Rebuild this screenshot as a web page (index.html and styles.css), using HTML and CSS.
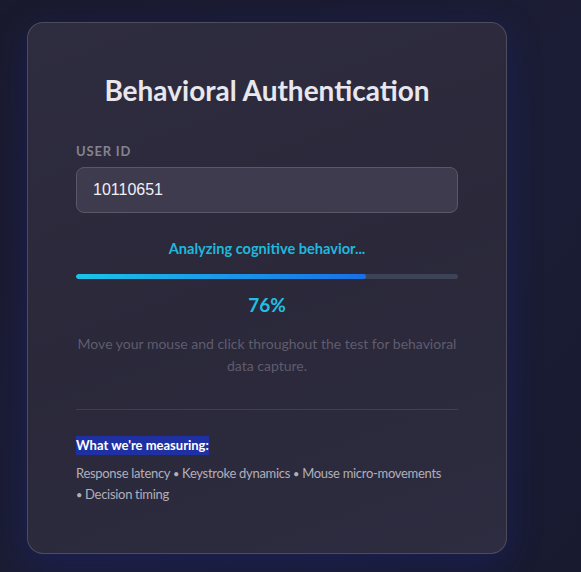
FILE: index.html
```html
<!DOCTYPE html>
<html lang="en">
<head>
  <meta charset="UTF-8">
  <meta name="viewport" content="width=device-width, initial-scale=1.0">
  <title>Behavioral Authentication</title>
  <link rel="stylesheet" href="styles.css">
</head>
<body>
  <div class="page">
    <div class="card">
      <h1 class="title">Behavioral Authentication</h1>

      <label class="field-label" for="user-id">User ID</label>
      <input type="text" id="user-id" class="field-input" value="10110651">

      <div class="status">Analyzing cognitive behavior...</div>
      <div class="progress">
        <div class="progress-fill" style="width: 76%;"></div>
      </div>
      <div class="percent">76%</div>

      <p class="hint">Move your mouse and click throughout the test for behavioral data capture.</p>

      <div class="divider"></div>

      <div class="measuring">
        <span class="measuring-title">What we're measuring:</span>
        <p class="measuring-list">Response latency <span class="dot">•</span>&nbsp;Keystroke dynamics <span class="dot">•</span>&nbsp;Mouse micro-movements <span class="dot">•</span>&nbsp;Decision timing</p>
      </div>
    </div>
  </div>
</body>
</html>
```

FILE: styles.css
```css
:root {
  --bg: #1a1a2e;
  --card-bg: #2c2a3d;
  --border: rgba(255, 255, 255, 0.16);
  --text: #e6e5ec;
  --muted: #85838f;
  --faint: #5f5c6e;
  --accent: #1fb8dc;
}

* {
  box-sizing: border-box;
}

body {
  margin: 0;
  font-family: "Segoe UI", Lato, "Noto Sans", sans-serif;
  background: linear-gradient(135deg, #1a1a2e 0%, #1b1d36 60%, #181a30 100%);
  color: var(--text);
  min-height: 572px;
}

.page {
  padding: 22px 27px 20px;
}

.card {
  width: 480px;
  padding: 48px;
  background: linear-gradient(160deg, #2e2c3f 0%, #2a2839 50%, #2d2c40 100%);
  border: 1px solid var(--border);
  border-radius: 16px;
  box-shadow: 0 8px 32px rgba(31, 38, 135, 0.37);
  display: flex;
  flex-direction: column;
}

.title {
  margin: 2px 0 35px;
  font-size: 28px;
  line-height: 34px;
  font-weight: 700;
  text-align: center;
  color: #e8e7ee;
}

.field-label {
  font-size: 13px;
  line-height: 18px;
  font-weight: 700;
  letter-spacing: 0.8px;
  text-transform: uppercase;
  color: var(--muted);
  margin-bottom: 7px;
}

.field-input {
  height: 46px;
  padding: 12px 16px;
  background: #3e3b4e;
  border: 1px solid #5a5769;
  border-radius: 8px;
  color: #f0eff5;
  font-family: "Liberation Sans", Arial, sans-serif;
  font-size: 16px;
  outline: none;
}

.status {
  margin-top: 26px;
  font-size: 14.6px;
  line-height: 20px;
  font-weight: 700;
  text-align: center;
  color: var(--accent);
}

.progress {
  margin-top: 15px;
  height: 5px;
  background: #3d4457;
  border-radius: 3px;
  overflow: hidden;
}

.progress-fill {
  height: 100%;
  background: linear-gradient(90deg, #1cc3e8 0%, #1a6fe6 100%);
  border-radius: 3px;
}

.percent {
  margin-top: 14px;
  font-size: 19px;
  line-height: 24px;
  font-weight: 700;
  text-align: center;
  color: #22bfe5;
}

.hint {
  margin: 16px 0 0;
  font-size: 14px;
  line-height: 22px;
  text-align: center;
  color: var(--faint);
}

.divider {
  margin-top: 32px;
  height: 1px;
  background: rgba(255, 255, 255, 0.1);
}

.measuring {
  margin-top: 24px;
}

.measuring-title {
  display: inline-block;
  font-size: 13px;
  line-height: 19px;
  font-weight: 700;
  color: #ffffff;
  background: #1f30a2;
}

.measuring-list {
  margin: 8px 0 0;
  font-size: 13px;
  line-height: 20px;
  letter-spacing: -0.3px;
  color: #b1afbb;
}

.measuring-list .dot {
  font-size: 11px;
}
```
